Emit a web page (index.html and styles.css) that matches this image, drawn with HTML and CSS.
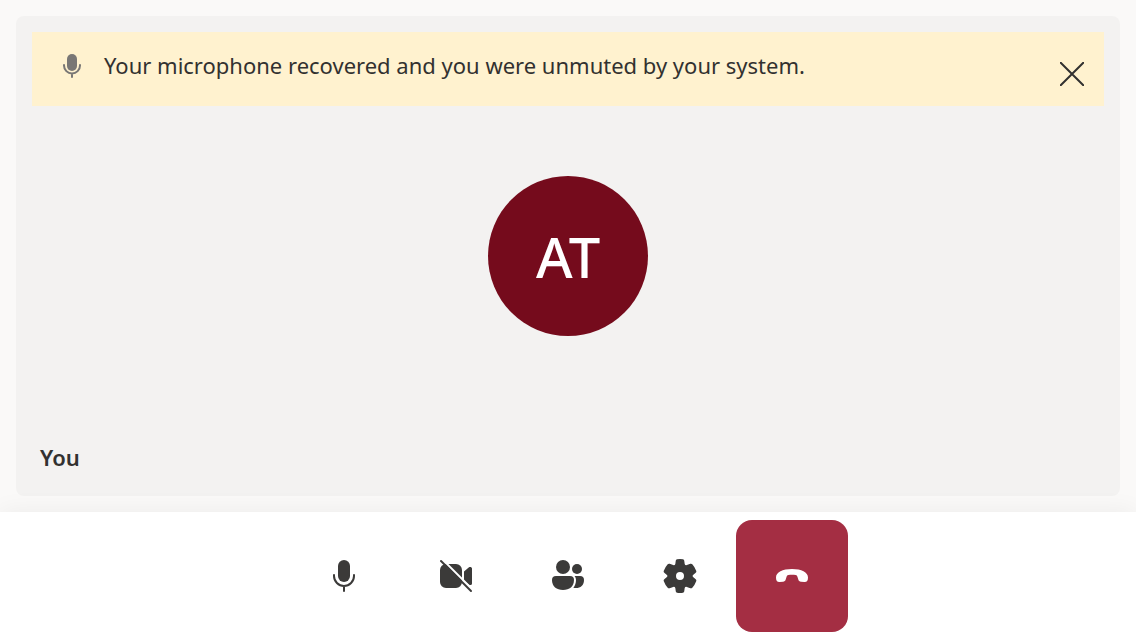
FILE: index.html
```html
<!DOCTYPE html>
<html lang="en">
<head>
<meta charset="utf-8">
<meta name="viewport" content="width=device-width, initial-scale=1">
<title>Call</title>
<link rel="stylesheet" href="styles.css">
</head>
<body>
<main class="stage">
  <section class="tile" aria-label="Your video">
    <div class="banner" role="status">
      <svg class="banner-icon" viewBox="0 0 32 32" aria-hidden="true">
        <rect x="11" y="4" width="10" height="17" rx="5" fill="currentColor"/>
        <path d="M8 15v.5a8 8 0 0 0 16 0V15M16 24v3" fill="none" stroke="currentColor" stroke-width="2" stroke-linecap="round"/>
      </svg>
      <p class="banner-text">Your microphone recovered and you were unmuted by your system.</p>
      <button class="dismiss" type="button" aria-label="Close">
        <svg class="dismiss-icon" viewBox="0 0 24 24" aria-hidden="true"><path d="M.5.5l23 23M23.5.5l-23 23" fill="none" stroke="currentColor" stroke-width="2" stroke-linecap="square"/></svg>
      </button>
    </div>
    <div class="persona"><div class="avatar">AT</div></div>
    <span class="name">You</span>
  </section>
</main>
<footer class="controls">
  <button class="control" type="button" aria-label="Mute">
    <svg class="icon" viewBox="0 0 40 40" aria-hidden="true">
      <rect x="14" y="4" width="12" height="22" rx="6" fill="currentColor"/>
      <path d="M10 19v1a10 10 0 0 0 20 0v-1M20 30v5" fill="none" stroke="currentColor" stroke-width="2" stroke-linecap="round"/>
    </svg>
  </button>
  <button class="control" type="button" aria-label="Turn on camera">
    <svg class="icon" viewBox="0 0 40 40" aria-hidden="true">
      <path d="M10 8h10a6 6 0 0 1 6 6v12a6 6 0 0 1-6 6H10a6 6 0 0 1-6-6V14a6 6 0 0 1 6-6zM28 15.500l5-4.200c1.200-.9 3-.2 3 1.200v15c0 1.400-1.800 2.100-3 1.200l-5-4.200z" fill="currentColor"/>
      <path d="M6 3L38 35" stroke="#fff" stroke-width="2"/>
      <path d="M5 5l30 30" stroke="currentColor" stroke-width="2" stroke-linecap="round"/>
    </svg>
  </button>
  <button class="control" type="button" aria-label="People">
    <svg class="icon" viewBox="0 0 40 40" aria-hidden="true">
      <g fill="currentColor">
        <circle cx="15" cy="11" r="7"/><circle cx="29" cy="13" r="5"/>
        <path d="M8 20h14a4 4 0 0 1 4 4c0 6.500-4.500 10-11 10S4 30.500 4 24a4 4 0 0 1 4-4z"/>
        <path d="M26.500 20H32a4 4 0 0 1 4 4c0 5.500-3.500 8-8 8-1 0-1.900-.1-2.700-.3 1.700-1.900 2.700-4.400 2.700-7.700 0-1.500-.6-3-1.500-4z"/>
      </g>
    </svg>
  </button>
  <button class="control" type="button" aria-label="Settings">
    <svg class="icon" viewBox="0 0 40 40" aria-hidden="true">
      <path fill="currentColor" fill-rule="evenodd" d="M17 3.300q3-.6 6 0 1 .2 1.200 1.200l.5 3.400q.4 1.700 2.200 1.200l3.400-1.300q1.200-.4 2 .5 2.700 3 4 6.700.3 1-.6 1.800l-2.600 2.100q-1.300 1.100 0 2.200l2.600 2.100q.9.800.6 1.800-1.300 3.700-4 6.700-.8.900-2 .5l-3.400-1.300q-1.800-.5-2.200 1.200l-.5 3.400q-.2 1-1.200 1.200-3 .6-6 0-1-.2-1.200-1.200l-.5-3.400q-.4-1.700-2.200-1.200l-3.400 1.300q-1.200.4-2-.5-2.700-3-4-6.700-.3-1 .6-1.800l2.600-2.100q1.300-1.100 0-2.200l-2.600-2.100q-.9-.8-.6-1.800 1.300-3.700 4-6.700.8-.9 2-.5l3.400 1.300q1.800.5 2.200-1.200l.5-3.400q.2-1 1.200-1.200zM20 16a4 4 0 1 0 0 8 4 4 0 0 0 0-8z"/>
    </svg>
  </button>
  <button class="control control-leave" type="button" aria-label="Leave">
    <svg class="icon" viewBox="0 0 40 40" aria-hidden="true">
      <path fill="currentColor" d="M20 13c9.500 0 16 3.200 16 8.500 0 3.200-1.200 4.800-3.700 4.600l-3.300-.3c-1.500-.1-2.300-.8-2.700-2.200l-.8-2.700c-.3-1-.9-1.600-1.900-1.800-2-.5-5.200-.5-7.200 0-1 .2-1.600.8-1.900 1.800l-.8 2.700c-.4 1.400-1.200 2.100-2.700 2.200l-3.300.3C5.200 26.300 4 24.700 4 21.500 4 16.200 10.500 13 20 13z"/>
    </svg>
  </button>
</footer>
</body>
</html>
```
FILE: styles.css
```css
* { box-sizing: border-box; }

body {
  margin: 0;
  min-height: 100vh;
  display: flex;
  flex-direction: column;
  background: #faf9f8;
  color: #323130;
  font-family: "Segoe UI", "Noto Sans", sans-serif;
}

button {
  border: 0;
  padding: 0;
  background: none;
  color: inherit;
  font: inherit;
  cursor: pointer;
}

svg { display: block; }

.stage {
  flex: 1;
  display: flex;
  padding: 16px;
}

.tile {
  flex: 1;
  display: grid;
  grid-template-rows: 1fr auto;
  border-radius: 8px;
  background: #f3f2f1;
}

.banner {
  grid-area: 1 / 1;
  align-self: start;
  z-index: 1;
  display: flex;
  align-items: flex-start;
  margin: 16px 16px 0;
  padding: 18px 8px 8px 24px;
  background: #fff2cf;
}

.banner-icon {
  flex: none;
  width: 32px;
  height: 32px;
  color: #797775;
}

.banner-text {
  flex: 1;
  margin: 0 0 0 16px;
  font-size: 22px;
  line-height: 30px;
}

.dismiss {
  flex: none;
  display: grid;
  place-items: center;
  width: 48px;
  height: 48px;
}

.dismiss-icon {
  width: 24px;
  height: 24px;
}

.persona {
  grid-area: 1 / 1 / 3 / 2;
  display: grid;
  place-items: center;
}

.avatar {
  display: grid;
  place-items: center;
  width: 160px;
  height: 160px;
  border-radius: 50%;
  background: #750b1c;
  color: #fff;
  font-size: 56px;
  font-weight: 500;
}

.name {
  grid-area: 2 / 1;
  padding: 0 24px 24px;
  font-size: 22px;
  font-weight: 600;
  line-height: 30px;
}

.controls {
  display: flex;
  justify-content: center;
  padding: 8px;
  background: #fff;
  box-shadow: 0 0 24px rgba(0, 0, 0, 0.06);
}

.control {
  display: grid;
  place-items: center;
  width: 112px;
  height: 112px;
  border-radius: 16px;
  color: #3b3a39;
}

.control-leave {
  background: #a42e43;
  color: #fff;
}

.icon {
  width: 40px;
  height: 40px;
}
```
